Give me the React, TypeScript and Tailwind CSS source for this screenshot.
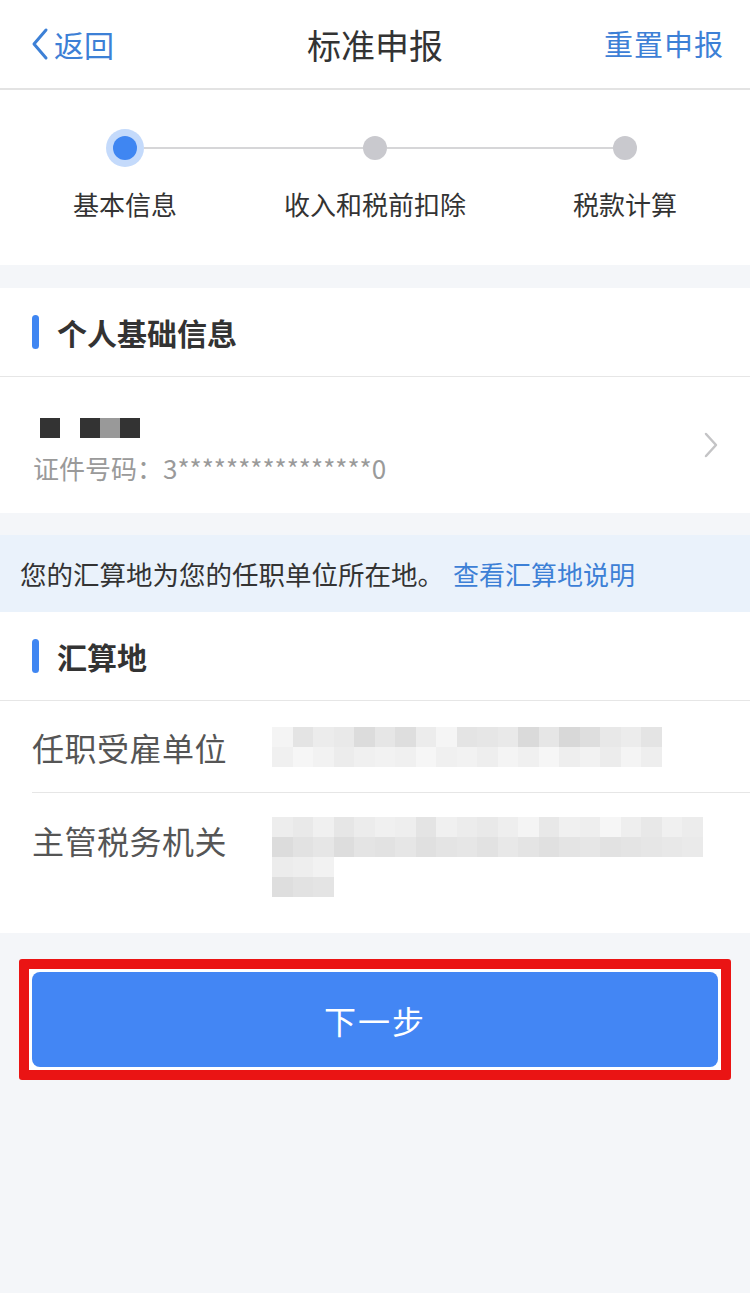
import React from "react";

const font = { fontFamily: '"Noto Sans CJK SC", "Noto Sans", sans-serif' };

const blurA = [
  ["bg-[#f4f4f4]", "bg-[#e4e4e4]", "bg-[#ececec]", "bg-[#e9e9e9]", "bg-[#dcdcdc]", "bg-[#e6e6e6]", "bg-[#dedede]", "bg-[#ececec]", "bg-[#f5f5f5]", "bg-[#e4e4e4]", "bg-[#e6e6e6]", "bg-[#e9e9e9]", "bg-[#dadada]", "bg-[#e6e6e6]", "bg-[#d8d8d8]", "bg-[#dedede]", "bg-[#e8e8e8]", "bg-[#ececec]", "bg-[#e4e4e4]"],
  ["bg-[#f0f0f0]", "bg-[#f6f6f6]", "bg-[#f2f2f2]", "bg-[#ececec]", "bg-[#f0f0f0]", "bg-[#f2f2f2]", "bg-[#f0f0f0]", "bg-[#f6f6f6]", "bg-[#f0f0f0]", "bg-[#f2f2f2]", "bg-[#eeeeee]", "bg-[#f4f4f4]", "bg-[#f0f0f0]", "bg-[#f6f6f6]", "bg-[#eeeeee]", "bg-[#f2f2f2]", "bg-[#ececec]", "bg-[#f4f4f4]", "bg-[#eeeeee]"],
];

const blurB = [
  ["bg-[#ededed]", "bg-[#e9e9e9]", "bg-[#f0f0f0]", "bg-[#e6e6e6]", "bg-[#ececec]", "bg-[#f0f0f0]", "bg-[#eeeeee]", "bg-[#e4e4e4]", "bg-[#f0f0f0]", "bg-[#ececec]", "bg-[#e9e9e9]", "bg-[#eeeeee]", "bg-[#f4f4f4]", "bg-[#e8e8e8]", "bg-[#f0f0f0]", "bg-[#eeeeee]", "bg-[#f6f6f6]", "bg-[#eeeeee]", "bg-[#e8e8e8]", "bg-[#f0f0f0]", "bg-[#ececec]"],
  ["bg-[#dcdcdc]", "bg-[#e2e2e2]", "bg-[#e6e6e6]", "bg-[#dddddd]", "bg-[#e4e4e4]", "bg-[#e2e2e2]", "bg-[#e6e6e6]", "bg-[#e0e0e0]", "bg-[#e4e4e4]", "bg-[#e6e6e6]", "bg-[#e2e2e2]", "bg-[#e8e8e8]", "bg-[#e4e4e4]", "bg-[#e0e0e0]", "bg-[#e4e4e4]", "bg-[#e6e6e6]", "bg-[#e2e2e2]", "bg-[#e4e4e4]", "bg-[#e6e6e6]", "bg-[#e8e8e8]", "bg-[#eaeaea]"],
  ["bg-[#ececec]", "bg-[#eeeeee]", "bg-[#f2f2f2]"],
  ["bg-[#dedede]", "bg-[#e2e2e2]", "bg-[#e4e4e4]"],
];

// pixelated (mosaic) placeholder for hidden text
function Blur({ rows }: { rows: string[][] }) {
  return (
    <div className="flex flex-col">
      {rows.map((r, i) => (
        <div key={i} className="flex">
          {r.map((c, j) => (
            <div key={j} className={`w-[20.5px] h-[20px] ${c}`} />
          ))}
        </div>
      ))}
    </div>
  );
}

function Step({ label, active, first, last }: { label: string; active?: boolean; first?: boolean; last?: boolean }) {
  return (
    <div className="flex flex-col items-center">
      <div className="flex items-center w-full h-[40px] mt-[38px]">
        <div className={`flex-1 h-[2px] ${first ? "" : "bg-[#d6d6d8]"}`} />
        {active ? (
          <div className="w-[38px] h-[38px] rounded-full bg-[#c4dafb] flex items-center justify-center">
            <div className="w-[24px] h-[24px] rounded-full bg-[#3f86f2]" />
          </div>
        ) : (
          <div className="w-[24px] h-[24px] rounded-full bg-[#c9c9ce]" />
        )}
        <div className={`flex-1 h-[2px] ${last ? "" : "bg-[#d6d6d8]"}`} />
      </div>
      <div className="mt-[18px] text-[26px] leading-[36px] text-[#333]">{label}</div>
    </div>
  );
}

function SectionTitle({ text }: { text: string }) {
  return (
    <div className="flex items-center h-[89px] px-[32px] border-b-[1.5px] border-[#e6e6e6] bg-white">
      <div className="w-[7px] h-[34px] rounded-full bg-[#3f86f2]" />
      <div className="ml-[18px] text-[30px] font-bold text-[#333]">{text}</div>
    </div>
  );
}

export default function App() {
  return (
    <div style={font} className="w-[750px] min-h-[1293px] bg-[#f4f6f9]">
      {/* header */}
      <div className="relative flex items-center justify-between h-[90px] pl-[30px] pr-[26px] bg-white border-b-2 border-[#e3e3e3]">
        <div className="flex items-center text-[30px] text-[#3d80d6]">
          <svg width="20" height="34" viewBox="0 0 20 34" className="mr-[4px]">
            <path d="M16 3 L4 17 L16 31" fill="none" stroke="#3d80d6" strokeWidth="3" strokeLinecap="round" strokeLinejoin="round" />
          </svg>
          返回
        </div>
        <div className="absolute left-0 right-0 text-center text-[34px] text-[#333] pointer-events-none">标准申报</div>
        <div className="text-[29px] text-[#3d80d6] tracking-[1px]">重置申报</div>
      </div>

      {/* steps */}
      <div className="grid grid-cols-3 h-[175px] bg-white">
        <Step label="基本信息" active first />
        <Step label="收入和税前扣除" />
        <Step label="税款计算" last />
      </div>

      <div className="h-[23px]" />

      <SectionTitle text="个人基础信息" />
      <div className="flex items-center justify-between h-[136px] pl-[33px] pr-[32px] pt-[14px] bg-white">
        <div className="flex flex-col">
          <div className="flex h-[20px] ml-[7px]">
            <div className="w-[20px] bg-[#333]" />
            <div className="w-[20px]" />
            <div className="w-[20px] bg-[#333]" />
            <div className="w-[20px] bg-[#999]" />
            <div className="w-[20px] bg-[#333]" />
          </div>
          <div className="mt-[12px] text-[26px] leading-[36px] text-[#9a9a9a]">证件号码：3****************0</div>
        </div>
        <svg width="14" height="26" viewBox="0 0 14 26" className="-mt-[14px]">
          <path d="M2 2 L12 13 L2 24" fill="none" stroke="#c4c4c6" strokeWidth="2.5" strokeLinecap="round" strokeLinejoin="round" />
        </svg>
      </div>

      <div className="h-[22px]" />

      <div className="flex items-center h-[77px] px-[20px] bg-[#eaf2fb]">
        <span className="text-[26.5px] text-[#333]">您的汇算地为您的任职单位所在地。</span>
        <span className="ml-[9px] text-[26px] text-[#3d80d6]">查看汇算地说明</span>
      </div>

      <SectionTitle text="汇算地" />
      <div className="bg-white pl-[32px]">
        <div className="flex items-center h-[92px] border-b-[1.5px] border-[#e6e6e6]">
          <div className="w-[240px] text-[32px] tracking-[0.5px] text-[#555]">任职受雇单位</div>
          <Blur rows={blurA} />
        </div>
        <div className="flex items-start h-[140px] pt-[24px]">
          <div className="w-[240px] text-[32px] tracking-[0.5px] leading-[46px] text-[#555]">主管税务机关</div>
          <Blur rows={blurB} />
        </div>
      </div>

      {/* button */}
      <div className="pt-[26px] px-[19px]">
        <div className="border-[10px] border-[#ea1414] rounded-[3px] p-[3px] bg-white">
          <button className="w-full h-[95px] rounded-[8px] bg-[#4386f4] text-white text-[32px] tracking-[2px]">下一步</button>
        </div>
      </div>
    </div>
  );
}
